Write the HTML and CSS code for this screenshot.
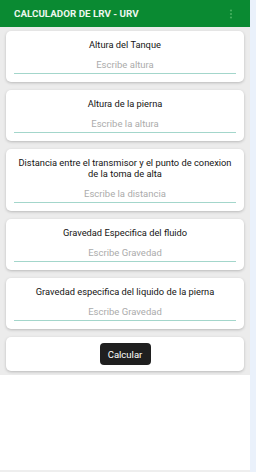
FILE: index.html
```html
<!DOCTYPE html>
<html lang="es">
<head>
<meta charset="utf-8">
<title>Calculador de LRV - URV</title>
<link rel="stylesheet" href="styles.css">
</head>
<body>
<div class="screen">
  <header class="appbar">
    <span class="appbar-title">CALCULADOR DE LRV - URV</span>
    <svg class="menu" width="4" height="10" viewBox="0 0 4 10"><circle cx="2" cy="1.5" r="1.1"/><circle cx="2" cy="5" r="1.1"/><circle cx="2" cy="8.5" r="1.1"/></svg>
  </header>
  <main class="content">
    <section class="card">
      <div class="label">Altura del Tanque</div>
      <div class="field">Escribe altura</div>
    </section>
    <section class="card">
      <div class="label">Altura de la pierna</div>
      <div class="field">Escribe la altura</div>
    </section>
    <section class="card">
      <div class="label">Distancia entre el transmisor y el punto de conexion de la toma de alta</div>
      <div class="field">Escribe la distancia</div>
    </section>
    <section class="card">
      <div class="label">Gravedad Especifica del fluido</div>
      <div class="field">Escribe Gravedad</div>
    </section>
    <section class="card">
      <div class="label">Gravedad especifica del liquido de la pierna</div>
      <div class="field">Escribe Gravedad</div>
    </section>
    <section class="card card-action">
      <button class="btn">Calcular</button>
    </section>
  </main>
</div>
</body>
</html>
```
FILE: styles.css
```css
html, body {
  margin: 0;
  padding: 0;
}
body {
  background: #eaf1fb;
  font-family: Roboto, "Liberation Sans", Arial, sans-serif;
  width: 256px;
  height: 472px;
  overflow: hidden;
}
.screen {
  width: 250px;
  height: 470px;
  background: #ffffff;
  border-bottom: 2px solid #eeeeee;
}
.appbar {
  height: 27px;
  background: #0a8a32;
  display: flex;
  align-items: center;
  justify-content: space-between;
  padding: 0 17px 0 14px;
}
.appbar-title {
  color: #eef7ef;
  font-weight: bold;
  font-size: 9.8px;
}
.menu {
  fill: #46b060;
}
.content {
  background: #ececec;
  padding: 4px 6px 4px;
  display: flex;
  flex-direction: column;
  gap: 8px;
}
.card {
  background: #ffffff;
  border-radius: 5px;
  box-shadow: 0 1px 3px rgba(0, 0, 0, 0.22);
  padding: 8px 8px 8px;
  display: flex;
  flex-direction: column;
  align-items: stretch;
}
.label {
  font-size: 9.3px;
  line-height: 11px;
  color: #141414;
  text-align: center;
}
.field {
  margin-top: 4px;
  height: 19px;
  line-height: 22px;
  font-size: 9.5px;
  color: #ababab;
  text-align: center;
  border-bottom: 1px solid #a3d6cb;
}
.card-action {
  align-items: center;
  padding: 6px 8px;
}
.btn {
  width: 51px;
  height: 22px;
  background: #1f1f1f;
  color: #ffffff;
  border: none;
  border-radius: 4px;
  font-family: Roboto, "Liberation Sans", Arial, sans-serif;
  font-size: 9.5px;
  padding: 0;
}
```
